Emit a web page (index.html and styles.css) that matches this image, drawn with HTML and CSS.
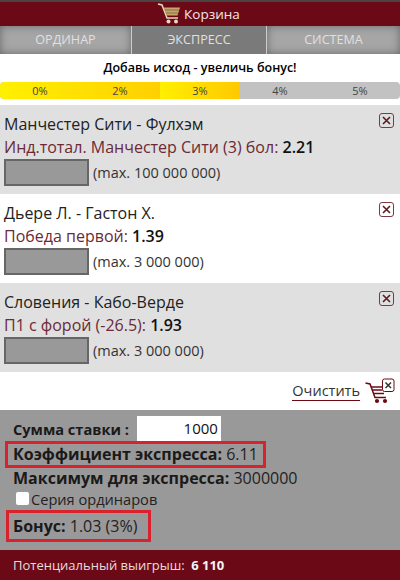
FILE: index.html
```html
<!DOCTYPE html>
<html lang="ru">
<head>
    <meta charset="UTF-8">
    <title>Корзина</title>
    <link rel="stylesheet" href="styles.css">
</head>
<body>
    <div id="header">
        <svg class="cart-icon" width="24" height="21" viewBox="0 0 24 21">
            <path d="M1 1 L5 2 L10 15 L21 15" fill="none" stroke="#e8d8c0" stroke-width="1.5"/>
            <path d="M6.5 4.5 H23 L20.5 12.5 H9.5 Z" fill="#c4a66c"/>
            <path d="M8 7 H22 M9 10 H21" stroke="#8a6a40" stroke-width="1"/>
            <circle cx="11.5" cy="18.5" r="2" fill="#e8d8c0"/>
            <circle cx="19" cy="18.5" r="2" fill="#e8d8c0"/>
        </svg>
        <span>Корзина</span>
    </div>
    <ul id="tabs">
        <li>ОРДИНАР</li>
        <li class="active">ЭКСПРЕСС</li>
        <li>СИСТЕМА</li>
    </ul>
    <div id="bonus-title">Добавь исход - увеличь бонус!</div>
    <ul id="bonus-bar">
        <li class="on">0%</li>
        <li class="on">2%</li>
        <li class="current">3%</li>
        <li>4%</li>
        <li>5%</li>
    </ul>
    <div class="bet grey">
        <div class="bet-name">Манчестер Сити - Фулхэм</div>
        <div class="bet-pick">Инд.тотал. Манчестер Сити (3) бол: <b>2.21</b></div>
        <div class="bet-stake"><span class="stake-box"></span>(max. 100 000 000)</div>
        <span class="close"><svg width="13" height="13" viewBox="0 0 13 13"><path d="M3 3 L10 10 M10 3 L3 10" stroke="#5a1a22" stroke-width="1.6"/></svg></span>
    </div>
    <div class="bet">
        <div class="bet-name">Дьере Л. - Гастон Х.</div>
        <div class="bet-pick">Победа первой: <b>1.39</b></div>
        <div class="bet-stake"><span class="stake-box"></span>(max. 3 000 000)</div>
        <span class="close"><svg width="13" height="13" viewBox="0 0 13 13"><path d="M3 3 L10 10 M10 3 L3 10" stroke="#5a1a22" stroke-width="1.6"/></svg></span>
    </div>
    <div class="bet grey">
        <div class="bet-name">Словения - Кабо-Верде</div>
        <div class="bet-pick">П1 с форой (-26.5): <b>1.93</b></div>
        <div class="bet-stake"><span class="stake-box"></span>(max. 3 000 000)</div>
        <span class="close"><svg width="13" height="13" viewBox="0 0 13 13"><path d="M3 3 L10 10 M10 3 L3 10" stroke="#5a1a22" stroke-width="1.6"/></svg></span>
    </div>
    <div id="clear-row">
        <span class="clear-link">Очистить</span>
        <svg class="clear-icon" width="30" height="26" viewBox="0 0 30 26">
            <path d="M0.5 5 L5 6 L10 19.5 L21 19.5" fill="none" stroke="#6b0a16" stroke-width="1.5"/>
            <path d="M6 9 H17 M7 12 H17 M8.5 15.5 H19" stroke="#6b0a16" stroke-width="1.4"/>
            <circle cx="12" cy="23" r="2.1" fill="#6b0a16"/>
            <circle cx="20" cy="23" r="2.1" fill="#6b0a16"/>
            <rect x="17.5" y="1" width="11.5" height="12.5" rx="2" fill="#fff" stroke="#6b0a16"/>
            <path d="M20.5 4.5 L26 10 M26 4.5 L20.5 10" stroke="#333" stroke-width="1.5"/>
        </svg>
    </div>
    <div id="summary">
        <div class="sum-row"><b>Сумма ставки :</b><span class="sum-input">1000</span></div>
        <div class="line marked wide"><b>Коэффициент экспресса:</b> 6.11</div>
        <div class="line"><b>Максимум для экспресса:</b> 3000000</div>
        <div class="series"><span class="check"></span>Серия ординаров</div>
        <div class="line marked narrow"><b>Бонус:</b> 1.03 (3%)</div>
    </div>
    <div id="footer">Потенциальный выигрыш: <b>6 110</b></div>
</body>
</html>
```

FILE: styles.css
```css
*{
    margin: 0;
    padding: 0;
    box-sizing: border-box;
}
ul{
    list-style: none;
}
body{
    width: 400px;
    height: 580px;
    overflow: hidden;
    background: #fff;
    font-family: "Open Sans", "Noto Sans", sans-serif;
    color: #111;
}
#header{
    height: 26px;
    border-top: 2px solid #4a4444;
    background: #6b0a16;
    color: #f2e6e6;
    font-size: 13.5px;
    display: flex;
    align-items: center;
    justify-content: center;
    gap: 3px;
    padding-right: 3px;
    padding-bottom: 1px;
}
#tabs{
    display: grid;
    grid-template-columns: 131px 136px 133px;
    height: 28px;
}
#tabs li{
    text-align: center;
    line-height: 27px;
    font-size: 12.6px;
    color: #e0e0e0;
    background: #a6a6a6;
    box-shadow: inset 0 0 8px #666;
}
#tabs .active{
    background: #7a7a7a;
    box-shadow: none;
    border-left: 1px solid #ccc;
    border-right: 1px solid #ccc;
}
#bonus-title{
    height: 28px;
    line-height: 28px;
    text-align: center;
    font-size: 12.5px;
    font-weight: 600;
    color: #000;
}
#bonus-bar{
    display: flex;
    height: 17px;
    background: #c2c2c2;
    border-radius: 4px;
    overflow: hidden;
    margin-bottom: 6px;
}
#bonus-bar li{
    flex: 1;
    text-align: center;
    font-size: 11px;
    line-height: 17px;
    color: #444;
}
#bonus-bar .on{
    background: linear-gradient(to right, #fff000, #ffe000);
}
#bonus-bar .on + .on{
    background: linear-gradient(to right, #ffe000, #ffd000);
}
#bonus-bar .current{
    background: linear-gradient(to right, #fff000, #ffc800);
}
.bet{
    position: relative;
    height: 89px;
    padding: 7px 4px 0;
}
.grey{
    background: #e0e0e0;
}
.bet-name{
    font-size: 16px;
    line-height: 24px;
    color: #222;
}
.bet-pick{
    font-size: 16px;
    line-height: 22px;
    color: #6b2a36;
}
.bet-pick b{
    color: #111;
    font-weight: 600;
}
.bet-stake{
    display: flex;
    align-items: center;
    gap: 4px;
    font-size: 14.5px;
    color: #333;
    margin-top: 1px;
}
.stake-box{
    width: 85px;
    height: 27px;
    background: #999;
    border: 2px solid #666;
}
.close{
    position: absolute;
    top: 8px;
    right: 6px;
    width: 15px;
    height: 15px;
    border: 1px solid #7a3a42;
    border-radius: 3px;
    display: flex;
    align-items: center;
    justify-content: center;
}
#clear-row{
    height: 38px;
    display: flex;
    align-items: center;
    justify-content: flex-end;
    gap: 5px;
    padding-right: 5px;
}
.clear-link{
    font-size: 14.5px;
    color: #333;
    border-bottom: 1px solid #6b0a16;
    line-height: 19px;
}
#summary{
    height: 140px;
    background: #999;
    padding: 6px 5px 0 13px;
    font-size: 16px;
    color: #222;
}
#summary b{
    color: #1a1a1a;
}
.sum-row{
    display: flex;
    align-items: center;
    gap: 8px;
    height: 25px;
    font-size: 14.6px;
}
.sum-input{
    width: 84px;
    height: 25px;
    line-height: 25px;
    background: #fff;
    text-align: right;
    padding-right: 3px;
    color: #111;
    font-size: 15px;
}
.line{
    line-height: 20px;
}
.marked{
    margin-left: -8px;
    padding-left: 5px;
    border: 3px solid #d8232f;
}
.wide{
    width: 261px;
    height: 27px;
}
.narrow{
    width: 145px;
    height: 32px;
    line-height: 26px;
    margin-top: 1px;
    margin-left: -7px;
    padding-left: 4px;
}
.series{
    display: flex;
    align-items: center;
    height: 21px;
    padding-left: 3px;
    font-size: 14.6px;
}
.check{
    width: 13px;
    height: 13px;
    background: #fff;
    border-radius: 2px;
    margin-right: 2px;
}
#footer{
    height: 30px;
    line-height: 30px;
    background: #6b0a16;
    color: #e8dcdc;
    font-size: 13px;
    padding-left: 13px;
}
#footer b{
    margin-left: 3px;
    color: #f4f4f4;
}
```
